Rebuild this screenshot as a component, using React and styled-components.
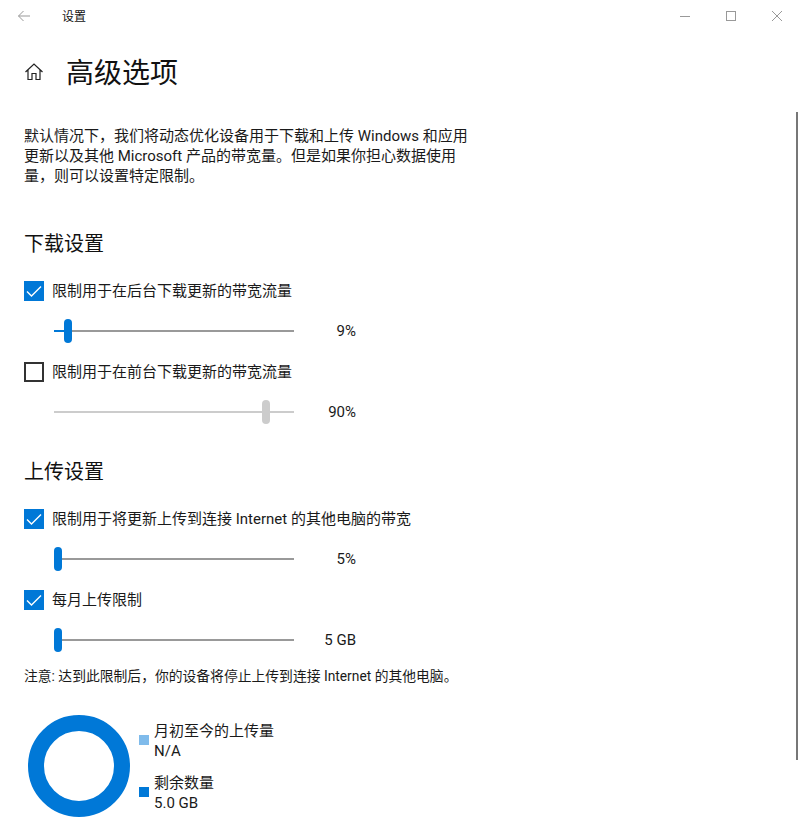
import React from 'react'
import styled, { createGlobalStyle } from 'styled-components'

const GlobalStyle = createGlobalStyle`
  html, body {
    margin: 0;
    padding: 0;
    background: #fff;
  }
  body {
    font-family: Roboto, "Noto Sans CJK SC", sans-serif;
    color: #1a1a1a;
  }
`

const Win = styled.div`
  position: relative;
  width: 800px;
  height: 831px;
  overflow: hidden;
  background: #fff;
`

const TitleBar = styled.header`
  display: flex;
  align-items: center;
  height: 32px;
`

const BackBtn = styled.div`
  display: flex;
  align-items: center;
  justify-content: center;
  width: 48px;
  height: 32px;
`

const AppName = styled.span`
  margin: -1px 0 1px 14px;
  font-size: 12px;
  color: #111;
`

const WinControls = styled.div`
  display: flex;
  margin-left: auto;
`

const WinBtn = styled.div`
  display: flex;
  align-items: center;
  justify-content: center;
  width: 46px;
  height: 32px;
`

const Content = styled.main`
  padding: 16px 0 0 24px;
`

const PageHead = styled.div`
  display: flex;
  align-items: center;
  height: 48px;
`

const HomeIcon = styled.svg`
  width: 20px;
  height: 20px;
  margin-right: 23px;
`

const PageTitle = styled.h1`
  margin: 2px 0 -2px -1px;
  font-size: 28px;
  font-weight: 400;
  line-height: 48px;
  color: #111;
`

const Intro = styled.p`
  margin: 30px 0 0;
  width: 450px;
  font-size: 15px;
  line-height: 20px;
`

const SectionTitle = styled.h2`
  margin: ${(p) => p.$top}px 0 0;
  font-size: 20px;
  font-weight: 400;
  line-height: 28px;
  color: #111;
`

const CheckRow = styled.label`
  display: flex;
  align-items: center;
  height: 20px;
  margin-top: ${(p) => p.$top}px;
  font-size: 15px;
  line-height: 20px;
`

const Box = styled.span`
  display: flex;
  align-items: center;
  justify-content: center;
  box-sizing: border-box;
  width: 20px;
  height: 20px;
  margin-right: 8px;
  background: ${(p) => (p.$on ? '#0078d7' : '#fff')};
  border: ${(p) => (p.$on ? 'none' : '2px solid #333')};
`

const SliderRow = styled.div`
  display: flex;
  align-items: center;
  height: 24px;
  margin-top: 18px;
  padding-left: 30px;
`

const Track = styled.div`
  position: relative;
  width: 240px;
  height: 2px;
  background: ${(p) => (p.$off ? '#ccc' : '#999')};
`

const Fill = styled.div`
  height: 2px;
  background: #0078d7;
`

const Thumb = styled.span`
  position: absolute;
  top: -11px;
  width: 8px;
  height: 24px;
  border-radius: 4px;
  background: ${(p) => (p.$off ? '#ccc' : '#0078d7')};
`

const SliderValue = styled.span`
  width: 62px;
  font-size: 15px;
  line-height: 20px;
  text-align: right;
`

const Note = styled.p`
  margin: 15px 0 0;
  font-size: 13.8px;
  line-height: 18px;
`

const Usage = styled.section`
  display: flex;
  align-items: center;
  margin-top: 30px;
  margin-left: 4px;
`

const Donut = styled.div`
  box-sizing: border-box;
  width: 102px;
  height: 102px;
  border: 16.5px solid #0078d7;
  border-radius: 50%;
`

const Legend = styled.div`
  display: flex;
  flex-direction: column;
  gap: 12px;
  margin-left: 9px;
`

const LegendItem = styled.div`
  display: flex;
  align-items: center;
  gap: 5px;
  font-size: 15px;
  line-height: 20px;
`

const LegendText = styled.div`
  margin: 1px 0 -1px;
`

const Swatch = styled.span`
  width: 10px;
  height: 10px;
  background: ${(p) => p.$color};
`

const ScrollThumb = styled.div`
  position: absolute;
  top: 112px;
  right: 2px;
  width: 2px;
  height: 648px;
  background: #777;
`

const Check = () => (
  <svg width="20" height="20" viewBox="0 0 20 20" fill="none">
    <path d="M3 10.5 L7.5 15 L17 5.5" stroke="#fff" strokeWidth="1.4" />
  </svg>
)

const CheckLine = ({ on = true, top, children }) => (
  <CheckRow $top={top}>
    <Box $on={on}>{on && <Check />}</Box>
    {children}
  </CheckRow>
)

// thumb travels 232px, the sliders start at 5
const Slider = ({ pct, label, off }) => {
  const left = Math.round(((pct - 5) / 95) * 232)
  return (
    <SliderRow>
      <Track $off={off}>
        {!off && <Fill style={{ width: left }} />}
        <Thumb $off={off} style={{ left }} />
      </Track>
      <SliderValue>{label}</SliderValue>
    </SliderRow>
  )
}

export default function App() {
  return (
    <Win>
      <GlobalStyle />
      <TitleBar>
        <BackBtn>
          <svg width="14" height="12" viewBox="0 0 14 12" fill="none" stroke="#999" strokeWidth="1">
            <path d="M13 6 H1.5 M6.5 1 L1.5 6 L6.5 11" />
          </svg>
        </BackBtn>
        <AppName>设置</AppName>
        <WinControls>
          <WinBtn>
            <svg width="10" height="10" viewBox="0 0 10 10" fill="none" stroke="#999">
              <path d="M0 5.5 H10" />
            </svg>
          </WinBtn>
          <WinBtn>
            <svg width="10" height="10" viewBox="0 0 10 10" fill="none" stroke="#999">
              <rect x="0.5" y="0.5" width="9" height="9" />
            </svg>
          </WinBtn>
          <WinBtn>
            <svg width="10" height="10" viewBox="0 0 10 10" fill="none" stroke="#999">
              <path d="M0 0 L10 10 M10 0 L0 10" />
            </svg>
          </WinBtn>
        </WinControls>
      </TitleBar>

      <Content>
        <PageHead>
          <HomeIcon viewBox="0 0 20 20" fill="none" stroke="#222" strokeWidth="1.2">
            <path d="M1.5 10 L10 2 L18.5 10 M4 8 V17.5 H8 V11.5 H12 V17.5 H16 V8" />
          </HomeIcon>
          <PageTitle>高级选项</PageTitle>
        </PageHead>

        <Intro>
          默认情况下，我们将动态优化设备用于下载和上传 Windows 和应用更新以及其他 Microsoft 产品的带宽量。但是如果你担心数据使用量，则可以设置特定限制。
        </Intro>

        <SectionTitle $top={44}>下载设置</SectionTitle>
        <CheckLine top={23}>限制用于在后台下载更新的带宽流量</CheckLine>
        <Slider pct={9} label="9%" />
        <CheckLine on={false} top={19}>限制用于在前台下载更新的带宽流量</CheckLine>
        <Slider pct={90} label="90%" off />

        <SectionTitle $top={34}>上传设置</SectionTitle>
        <CheckLine top={23}>限制用于将更新上传到连接 Internet 的其他电脑的带宽</CheckLine>
        <Slider pct={5} label="5%" />
        <CheckLine top={19}>每月上传限制</CheckLine>
        <Slider pct={5} label="5 GB" />

        <Note>注意: 达到此限制后，你的设备将停止上传到连接 Internet 的其他电脑。</Note>

        <Usage>
          <Donut />
          <Legend>
            <LegendItem>
              <Swatch $color="#7fbbeb" />
              <LegendText>
                月初至今的上传量
                <br />
                N/A
              </LegendText>
            </LegendItem>
            <LegendItem>
              <Swatch $color="#0078d7" />
              <LegendText>
                剩余数量
                <br />
                5.0 GB
              </LegendText>
            </LegendItem>
          </Legend>
        </Usage>
      </Content>

      <ScrollThumb />
    </Win>
  )
}
